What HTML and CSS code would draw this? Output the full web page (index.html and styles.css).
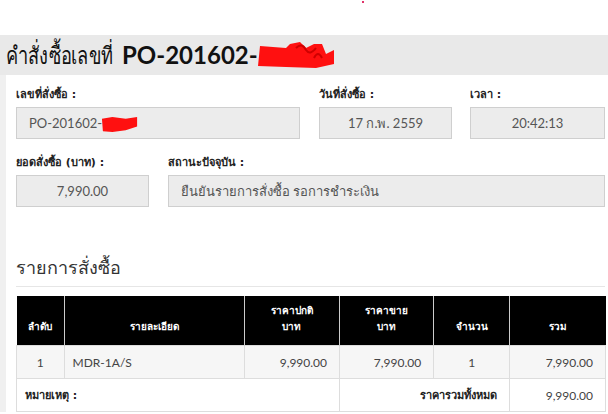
FILE: index.html
```html
<!DOCTYPE html>
<html>
<head>
    <title>คำสั่งซื้อ</title>
    <link rel="stylesheet" href="styles.css">
</head>
<body>
    <div class="top-gap"><span class="dot"></span></div>

    <div class="title-bar">
        <h1><span class="th">คำสั่งซื้อเลขที่</span> <b>PO-201602-</b><svg class="scribble big" viewBox="0 0 80 30"><path d="M2 26 L4 6 L30 8 L34 4 L44 2 L50 8 L58 4 L66 4 L70 14 L78 10 L78 24 L60 28 L30 27 Z" fill="#ff1010"/><path d="M40 8 q6 -6 10 2 q4 6 10 -2 M58 18 q4 -8 8 0" stroke="#d00000" stroke-width="2" fill="none"/></svg></h1>
    </div>

    <div class="panel">
        <div class="fields row-1">
            <div class="field">
                <label>เลขที่สั่งซื้อ :</label>
                <div class="box">PO-201602-<svg class="scribble small" viewBox="0 0 40 20"><path d="M1 4 L12 2 L26 4 L38 2 L38 12 L26 16 L12 18 L2 17 Z" fill="#ff1010"/></svg></div>
            </div>
            <div class="field">
                <label>วันที่สั่งซื้อ :</label>
                <div class="box center">17 ก.พ. 2559</div>
            </div>
            <div class="field">
                <label>เวลา :</label>
                <div class="box center">20:42:13</div>
            </div>
        </div>

        <div class="fields row-2">
            <div class="field">
                <label>ยอดสั่งซื้อ (บาท) :</label>
                <div class="box center">7,990.00</div>
            </div>
            <div class="field">
                <label>สถานะปัจจุบัน :</label>
                <div class="box">ยืนยันรายการสั่งซื้อ รอการชำระเงิน</div>
            </div>
        </div>

        <h2>รายการสั่งซื้อ</h2>

        <table class="items">
            <thead>
                <tr>
                    <th class="c-no">ลำดับ</th>
                    <th class="c-desc">รายละเอียด</th>
                    <th class="c-price">ราคาปกติ<br>บาท</th>
                    <th class="c-sale">ราคาขาย<br>บาท</th>
                    <th class="c-qty">จำนวน</th>
                    <th class="c-sum">รวม</th>
                </tr>
            </thead>
            <tbody>
                <tr class="item">
                    <td class="center">1</td>
                    <td>MDR-1A/S</td>
                    <td class="num">9,990.00</td>
                    <td class="num">7,990.00</td>
                    <td class="center">1</td>
                    <td class="num">7,990.00</td>
                </tr>
                <tr class="total">
                    <td colspan="3" class="note">หมายเหตุ :</td>
                    <td colspan="2" class="num strong">ราคารวมทั้งหมด</td>
                    <td class="num">9,990.00</td>
                </tr>
            </tbody>
        </table>
    </div>
</body>
</html>
```

FILE: styles.css
```css
body {
    margin: 0;
    font-family: Lato, "Noto Sans", sans-serif;
    color: #333;
    background: #fff;
    overflow: hidden;
}

.top-gap {
    height: 35px;
    position: relative;
}

.dot {
    position: absolute;
    left: 362px;
    top: 1px;
    width: 2px;
    height: 2px;
    background: #e0336a;
}

.title-bar {
    background: #e9e9e9;
    height: 40px;
    padding-left: 6px;
}

h1 {
    margin: 0;
    font-size: 24px;
    font-weight: normal;
    line-height: 36px;
    padding-top: 2px;
    color: #111;
    display: flex;
    align-items: center;
}

h1 .th {
    display: inline-block;
    transform: scaleX(0.76);
    transform-origin: left center;
    margin-right: -34px;
}

h1 b {
    font-weight: bold;
    margin-left: 9px;
}

.scribble {
    display: inline-block;
}

.scribble.big {
    width: 80px;
    height: 30px;
    margin-left: -2px;
}

.scribble.small {
    width: 38px;
    height: 19px;
    vertical-align: middle;
    margin-left: -1px;
}

.panel {
    border-left: 6px solid #f0f0f0;
    padding: 12px 0 0 10px;
}

.fields {
    display: grid;
    column-gap: 19px;
}

.row-1 {
    grid-template-columns: 284px 133px 134px;
    column-gap: 20px 19px;
}

.row-1 .field:nth-child(3) {
    margin-left: -1px;
}

.row-2 {
    grid-template-columns: 133px 437px;
    margin-top: 16px;
}

.field label {
    display: block;
    font-family: "DejaVu Sans", sans-serif;
    font-size: 11px;
    font-weight: bold;
    color: #222;
    height: 20px;
    line-height: 16px;
}

.box {
    height: 30px;
    background: #ececec;
    border: 1px solid #cfcfcf;
    font-size: 13px;
    line-height: 30px;
    color: #555;
    padding: 0 12px;
    white-space: nowrap;
    overflow: hidden;
}

.box.center {
    text-align: center;
}

h2 {
    margin: 46px 0 0;
    font-size: 18px;
    font-weight: normal;
    color: #333;
    padding-bottom: 4px;
    border-bottom: 1px solid #e6e6e6;
    width: 589px;
}

.items {
    margin-top: 9px;
    border-collapse: collapse;
    width: 590px;
    font-size: 12px;
}

.items th {
    background: #000;
    color: #fff;
    font-family: "DejaVu Sans", sans-serif;
    font-size: 10px;
    font-weight: bold;
    vertical-align: bottom;
    text-align: center;
    height: 39px;
    padding: 0 6px 10px;
    border-left: 1px solid #ccc;
    line-height: 16px;
}

.items th:first-child {
    border-left: none;
}

.c-no { width: 35px; }
.c-desc { width: 167px; }
.c-price { width: 82px; }
.c-sale { width: 81px; }
.c-qty { width: 63px; }
.c-sum { width: 83px; }

.items td {
    border: 1px solid #ddd;
    height: 32px;
    padding: 0 8px;
    color: #444;
}

.items .item td {
    background: #f6f6f6;
}

.items .center {
    text-align: center;
}

.items .num {
    text-align: right;
    padding-right: 12px;
}

.items .note {
    font-family: "DejaVu Sans", sans-serif;
    font-weight: bold;
    font-size: 11px;
    color: #222;
    border-right: 1px solid #ddd;
}

.items .strong {
    font-family: "DejaVu Sans", sans-serif;
    font-weight: bold;
    font-size: 11px;
    color: #222;
}
```
